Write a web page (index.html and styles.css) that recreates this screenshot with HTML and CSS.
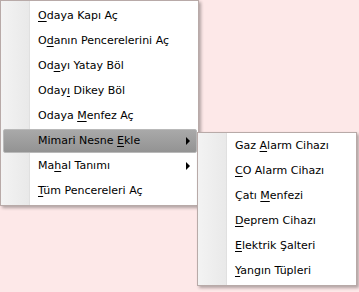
FILE: index.html
```html
<!DOCTYPE html>
<html lang="tr">
<head>
    <meta charset="UTF-8">
    <meta name="viewport" content="width=device-width, initial-scale=1.0">
    <title>Oda Menüsü</title>
    <link rel="stylesheet" href="styles.css">
</head>
<body>
    <div class="desk">
        <ul class="menu main-menu">
            <li class="item"><span class="label"><u>O</u>daya Kapı Aç</span></li>
            <li class="item"><span class="label">O<u>d</u>anın Pencerelerini Aç</span></li>
            <li class="item"><span class="label">Od<u>a</u>yı Yatay Böl</span></li>
            <li class="item"><span class="label">Oday<u>ı</u> Dikey Böl</span></li>
            <li class="item"><span class="label">Odaya <u>M</u>enfez Aç</span></li>
            <li class="item active"><span class="label">Mimari Nesne <u>E</u>kle</span><span class="arrow"></span></li>
            <li class="item"><span class="label">Ma<u>h</u>al Tanımı</span><span class="arrow"></span></li>
            <li class="item"><span class="label"><u>T</u>üm Pencereleri Aç</span></li>
        </ul>
        <ul class="menu sub-menu">
            <li class="item"><span class="label">Gaz <u>A</u>larm Cihazı</span></li>
            <li class="item"><span class="label"><u>C</u>O Alarm Cihazı</span></li>
            <li class="item"><span class="label">Çatı <u>M</u>enfezi</span></li>
            <li class="item"><span class="label"><u>D</u>eprem Cihazı</span></li>
            <li class="item"><span class="label"><u>E</u>lektrik Şalteri</span></li>
            <li class="item"><span class="label"><u>Y</u>angın Tüpleri</span></li>
        </ul>
    </div>
</body>
</html>
```

FILE: styles.css
```css
body {
    margin: 0;
    background-color: #fde8e8; /* pink desktop */
    font-family: "DejaVu Sans", Verdana, sans-serif;
    font-size: 11px;
    color: #000;
}
.desk {
    position: relative;
    width: 359px;
    height: 292px;
}
.menu {
    list-style: none;
    margin: 0;
    border: 1px solid #b8aaa8;
    /* grey gutter on the left, then a thin separator */
    background: linear-gradient(to right, #f3f3f3 0, #e9e9e9 28px, #e0e0e0 28px, #e0e0e0 29px, #fff 29px, #fff 100%);
    box-shadow: 2px 2px 3px rgba(0, 0, 0, 0.3);
}
.main-menu {
    width: 197px;
    padding: 2px 0 1px 0;
}
.sub-menu {
    position: absolute;
    left: 197px;
    top: 132px;
    width: 158px;
    padding: 0 0 1px 0;
}
.item {
    display: flex;
    align-items: center;
    height: 22px;
    margin: 1px 1px 1px 2px;
    padding: 0 6px 0 34px;
    border: 1px solid transparent;
    border-radius: 2px;
    white-space: nowrap;
}
.label {
    margin-top: -1px;
}
.item u {
    text-decoration: underline;
    text-underline-offset: 2px;
}
.item.active {
    background: linear-gradient(#a9a9a9, #939393);
    border-color: #b9b9b9;
}
.arrow {
    margin-left: auto;
    width: 0;
    height: 0;
    border-left: 4px solid #000;
    border-top: 4px solid transparent;
    border-bottom: 4px solid transparent;
}
```
